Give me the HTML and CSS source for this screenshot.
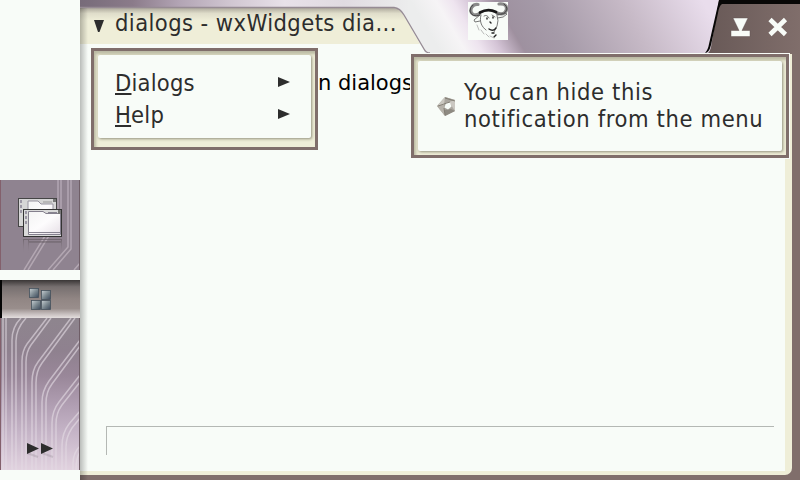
FILE: index.html
```
<!DOCTYPE html>
<html lang="en">
<head>
<meta charset="utf-8">
<title>dialogs</title>
<link rel="stylesheet" href="styles.css">
</head>
<body>
<div class="screen">
  <nav class="sidebar">
    <div class="task">
      <svg width="80" height="90" viewBox="0 0 80 90">
        <defs>
          <linearGradient id="pane" x1="0" y1="0" x2="1" y2="1"><stop offset="0" stop-color="#f4f4f4"/><stop offset=".5" stop-color="#fdfcfd"/><stop offset="1" stop-color="#e6dfe6"/></linearGradient>
          <linearGradient id="fade" x1="0" y1="0" x2="0" y2="1"><stop offset="0" stop-color="#62595f" stop-opacity=".7"/><stop offset="1" stop-color="#8d818d" stop-opacity="0"/></linearGradient>
        </defs>
        <g fill="none" stroke="#b3a7b2" stroke-width="1.5">
          <path d="M58 0V35L24 90M61 0V36L28 90M68 0V67L48 90M71 0V69L53 90M80 83L74 90"/>
        </g>
        <path d="M0 0V90" stroke="#83606c" stroke-width="2"/>
        <path d="M79.5 0V90" stroke="#6f5e67"/>
        <rect x="18.500" y="18.500" width="38" height="28" fill="#d6d6d6" stroke="#454545"/>
        <path d="M28 21H38L41 24H53V45H28Z" fill="url(#pane)" stroke="#9894a0"/>
        <path d="M43 22h9" stroke="#999"/><path d="M53 19h3v3h-3z" fill="#777"/>
        <path d="M20 20h2v3h-2zM20 25h2v3h-2zM20 30h2v3h-2z" fill="#9c97a5"/>
        <rect x="23.500" y="29.500" width="38" height="27" fill="#dadada" stroke="#343434"/>
        <path d="M28.500 31.500H43L46 33.500H60.500V54.500H28.500Z" fill="url(#pane)" stroke="#85808e"/>
        <path d="M28 52.500H61M48 32.500h9" stroke="#888491"/><path d="M58 30h3v4h-3z" fill="#777"/>
        <path d="M25 31h2v3h-2zM25 36h2v3h-2zM25 41h2v3h-2z" fill="#9c97a5"/>
        <path d="M23 59H62V73H23ZM24 60V73H28V60ZM29 60V61H61V60ZM29 63V73H61V63Z" fill="url(#fade)" fill-rule="evenodd"/>
      </svg>
    </div>
    <div class="launcher">
      <svg width="80" height="38" viewBox="0 0 80 38">
        <defs><linearGradient id="cube" x1="0" y1="0" x2="1" y2="1"><stop offset="0" stop-color="#c9d1d4"/><stop offset=".55" stop-color="#77848c"/><stop offset="1" stop-color="#3d4a5c"/></linearGradient></defs>
        <g fill="url(#cube)" stroke="#44505c" stroke-width=".8">
          <rect x="29.400" y="8.400" width="9" height="9"/><rect x="41.400" y="10.400" width="9" height="9"/>
          <rect x="31.400" y="20.400" width="9" height="9"/><rect x="41.400" y="20.400" width="9" height="9"/>
        </g>
      </svg>
    </div>
    <div class="more">
      <svg width="80" height="152" viewBox="0 0 80 152">
        <g fill="none" stroke="#e4dce3" stroke-opacity=".62" stroke-width="1.500">
          <path d="M3 0V152M6 0V152"/>
          <path d="M21 0Q12 9 12 22V152M26 0Q16 11 16 23V152"/>
          <path d="M47 0L27 26Q22 33 22 43V152M51 0L31 27Q26 34 26 44V152"/>
          <path d="M71 0L38 44Q32 52 32 64V152M75 0L42 45Q36 53 36 65V152"/>
          <path d="M80 22L49 63Q42 73 42 84V152M80 28L52 66Q46 74 46 85V152"/>
          <path d="M80 57L59 84Q52 93 52 105V152M80 64L62 87Q56 95 56 106V152"/>
          <path d="M80 93L69 106Q62 115 62 128V152M80 100L72 110Q66 119 66 129V152"/>
          <path d="M80 128Q73 135 73 145V152M80 134Q76 140 76 152"/>
        </g>
        <path d="M0 0V152" stroke="#83606c" stroke-width="2"/>
        <path d="M79.500 0V152" stroke="#6f5e67"/>
        <path d="M27 135L38 139M42 135L53 139" stroke="#776d76" stroke-opacity=".22" stroke-width="2"/>
        <path d="M27 125L39 130.500L27 136ZM41 125L53 130.500L41 136Z" fill="#2d2d2d"/>
      </svg>
    </div>
  </nav>

  <main class="window">
    <header class="titlebar">
      <svg class="title-art" width="720" height="54" viewBox="0 0 720 54">
        <defs>
          <linearGradient id="sky" gradientUnits="userSpaceOnUse" x1="0" y1="0" x2="330" y2="0"><stop offset="0" stop-color="#776b79"/><stop offset=".16" stop-color="#8b7b8a"/><stop offset=".3" stop-color="#b2a4b4"/><stop offset=".46" stop-color="#d1c7d2"/><stop offset=".62" stop-color="#e8e1e9"/><stop offset=".8" stop-color="#e0dbe1"/><stop offset="1" stop-color="#eceded"/></linearGradient>
          <linearGradient id="sheen" gradientUnits="userSpaceOnUse" x1="330" y1="0" x2="393" y2="-37"><stop offset="0" stop-color="#eceded"/><stop offset=".3" stop-color="#f6f4f6"/><stop offset=".5" stop-color="#eee4ef"/><stop offset=".72" stop-color="#d4c4d6"/><stop offset="1" stop-color="#9f909f"/></linearGradient>
          <linearGradient id="violet" gradientUnits="userSpaceOnUse" x1="420" y1="60" x2="600" y2="-40"><stop offset="0" stop-color="#998a99"/><stop offset=".3" stop-color="#a59aa8"/><stop offset=".65" stop-color="#c6b9c6"/><stop offset="1" stop-color="#e9ddec"/></linearGradient>
          <linearGradient id="shade" x1="0" y1="0" x2="0" y2="1"><stop offset="0" stop-color="#aeaa9d"/><stop offset=".15" stop-color="#dfddca"/><stop offset=".35" stop-color="#efeed8"/></linearGradient>
          <linearGradient id="frame"><stop offset="0" stop-color="#685957"/><stop offset="1" stop-color="#806e6b"/></linearGradient>
        </defs>
        <path d="M0 0H400V54H0Z" fill="url(#sky)"/>
        <path d="M328 0H500V54H328Z" fill="url(#sheen)"/>
        <path d="M415 0H640V54H447Z" fill="url(#violet)"/>
        <path d="M0 8H314Q319 8 323 14L346 54H0Z" fill="#f8fcf8"/>
        <path d="M0 8H314Q319 8 323 14L340 44H0Z" fill="url(#shade)"/>
        <path d="M0 7.500H314Q320 8 324 15L344 49Q346 53 350 53" fill="none" stroke="#968b94" stroke-width="1.300"/>
        <path d="M639 0H720V54H627Q630 52 631 47Z" fill="url(#frame)"/>
        <path d="M639 0H720V4H642Q639 6 638 13L631 45Q629 53 625 53Q628 50 629 44Z" fill="#080706"/>
        <path d="M340 53.500H710" stroke="#f8fcf8"/>
        <path d="M14 20H24L19.500 32H18Z" fill="#2d2d2d"/>
        <g stroke="#605050" stroke-opacity=".45" fill="#f8fcf8"><path d="M653 18H668L662 30.500H670V36.500H651V30.500H659Z"/></g>
        <path d="M690 19.500L705.500 34.500M705.500 19.500L690 34.500" stroke="#f8fcf8" stroke-width="4.600"/>
        <rect x="388" y="2" width="40" height="38" fill="#f8fcf8"/>
        <g fill="none" stroke-linecap="round">
          <path d="M399 14C393 17 389 12 392 7Q394 4 398 4.500M417 13C424 16 428 11 426 6Q424 3.500 419 4" stroke="#8a8a8a" stroke-width="3.200"/>
          <path d="M400 15Q392 18 390 11Q390 7 393 5M417 14Q425 16 427 9Q427 6 424 4" stroke="#444" stroke-width="1"/>
          <path d="M400 12.500Q408 8 416 12" stroke="#171717" stroke-width="2.800"/>
          <path d="M400 15L394 20L395 22L400 21M418 15Q424 12 427 14Q424 18 418 18M401 15C399 22 402 27 406 30M417 15Q419 21 417 26L414 32M404 16Q407 14 409 18M412 15L415 17" stroke="#555" stroke-width=".8"/>
          <path d="M407 18V19M413 17V18M410 22L411 23M409 29Q413 32 416 28M412 33L414 33M414 37L416 35" stroke="#222" stroke-width="1.400"/>
          <path d="M397 25L399 30M401 30L404 34M406 34L409 37M410 36L414 38" stroke="#aaa" stroke-width=".8"/>
        </g>
      </svg>
      <h1 class="title">dialogs - wxWidgets dia...</h1>
    </header>
    <section class="content">
      <p class="message">n dialogs</p>
      <div class="field"></div>
    </section>
  </main>

  <div class="popup menu">
    <div class="panel">
      <div class="item"><span><u>D</u>ialogs</span><svg width="12" height="12"><path d="M0 0L12 5L0 10Z"/></svg></div>
      <div class="item"><span><u>H</u>elp</span><svg width="12" height="12"><path d="M0 0L12 5L0 10Z"/></svg></div>
    </div>
  </div>
  <div class="popup notice">
    <div class="panel">
      <svg width="20" height="20" viewBox="0 0 20 20">
        <path d="M8 0L18 3V14L8 19L0 9Z" fill="#aaa69f"/>
        <path d="M8 0L18 3L12 6L7 6Z" fill="#aaa69f"/><path d="M8 0L7 8L0 9Z" fill="#cac7c0"/>
        <path d="M18 3V14L14 8L12 5Z" fill="#cbc8c2"/><path d="M18 14L8 19L7 13L14 12Z" fill="#8e8a82"/><path d="M0 9L7 8L8 19Z" fill="#b6b2aa"/>
        <path d="M9 6L13 5.500L14.500 9.500L11 12.500L7.500 10.500Z" fill="#f8fcf8"/>
        <path d="M1 9L13 5M8 1L18 4M8 18L7 11" stroke="#777268" stroke-width=".8" fill="none"/>
      </svg>
      <p>You can hide this<br>notification from the menu</p>
    </div>
  </div>
</div>
</body>
</html>
```
FILE: styles.css
```
* { box-sizing: border-box; }
body {
  margin: 0;
  background: #f8fcf8;
  color: #2d2d2d;
  font-family: "DejaVu Sans Condensed", "DejaVu Sans", sans-serif;
  font-stretch: condensed;
}
svg { display: block; flex: none; }
h1, p { margin: 0; font-weight: normal; white-space: nowrap; }
.screen { position: relative; display: flex; width: 800px; height: 480px; overflow: hidden; }
.sidebar { flex: none; width: 80px; padding-top: 180px; }
.task { height: 90px; margin-bottom: 10px; background: #8f8390; }
.launcher {
  height: 38px;
  border-left: 2px solid #050505;
  background: linear-gradient(#3a3636, #777070 18%, #918684 50%, #998e8c 75%, #c8c0c0 90%, #e4dede);
}
.launcher svg { margin-left: -2px; }
.more { height: 152px; background: linear-gradient(#8e858e, #8f818f 22%, #998799 38%, #b19fb3 58%, #c5b4c7 75%, #e1d2df); }
.window {
  position: relative;
  display: flex;
  flex-direction: column;
  width: 720px;
  background: #806e6b;
}
.window::before {
  content: "";
  position: absolute;
  z-index: 2;
  top: 8px;
  bottom: 0;
  left: 0;
  width: 8px;
  background: linear-gradient(90deg, rgba(0,0,0,.25), rgba(0,0,0,.15) 40%, rgba(0,0,0,0));
}
.titlebar { position: relative; height: 54px; flex: none; }
.title-art { position: absolute; inset: 0; }
.title { position: relative; padding: 9px 0 0 35px; font-size: 23.5px; line-height: 28px; letter-spacing: .42px; }
.content {
  width: 712px;
  height: 421px;
  border: solid #efeed8;
  border-width: 0 7px 4px 0;
  border-radius: 0 0 7px 0;
  background: #f8fcf8;
}
.message {
  padding: 16px 0 0 238px;
  color: #000;
  font-family: "DejaVu Sans", sans-serif;
  font-stretch: normal;
  font-size: 21px;
  line-height: 26px;
}
.field { width: 668px; height: 29px; margin: 330px 0 0 26px; border: solid #b4b8b4; border-width: 1px 0 0 1px; }
.popup { position: absolute; z-index: 3; border: 3px solid #806e6b; background: #efeed8; }
.popup { box-shadow: inset 2px 3px 3px rgba(90, 88, 65, .35); }
.menu { left: 91px; top: 48px; width: 227px; height: 102px; padding: 4px 4px 9px; }
.panel { height: 100%; border-radius: 2px; background: #f8fcf8; box-shadow: 1px 1px 3px rgba(70, 68, 50, .55); }
.menu .panel { padding: 12px 21px 0 17px; }
.item { display: flex; align-items: center; justify-content: space-between; height: 32px; font-size: 23.5px; line-height: 32px; letter-spacing: .2px; }
.item svg { fill: #2d2d2d; }
.item u { text-decoration-thickness: 2px; text-underline-offset: 2px; }
.notice { left: 411px; top: 54px; width: 378px; height: 104px; padding: 4px 4px 4px; outline: 1px solid #f8fcf8; }
.notice .panel { display: flex; padding-left: 19px; }
.notice .panel > svg { margin-top: 36px; }
.notice p { padding: 18px 0 0 7px; font-size: 23.5px; line-height: 27px; letter-spacing: .62px; }
```
